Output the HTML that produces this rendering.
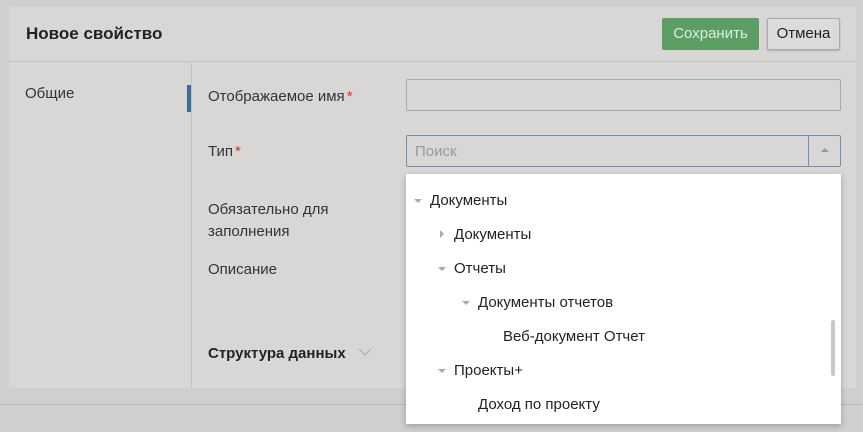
<!DOCTYPE html>
<html><head><meta charset="utf-8"><style>
*{box-sizing:border-box;margin:0;padding:0}
body{width:863px;height:432px;overflow:hidden;background:#cfcfce;font-family:"Liberation Sans","Noto Sans CJK SC",sans-serif;position:relative;color:#333}
.dlg{position:absolute;left:9px;top:7px;width:847px;height:381px;background:#d8d7d6}
.hdr{position:absolute;left:0;top:0;width:847px;height:55px;border-bottom:1px solid #c4c3c2}
.title{position:absolute;left:17px;top:17px;font-size:17px;font-weight:bold;color:#222}
.save{position:absolute;left:653px;top:11px;width:97px;height:32px;background:#5c9e64;color:#dfeee0;font-size:15px;line-height:32px;text-align:center;border-radius:2px}
.cancel{position:absolute;left:758px;top:11px;width:73px;height:32px;border:1px solid #aaa;background:#dcdbda;color:#222;font-size:15px;line-height:30px;text-align:center;border-radius:2px;box-shadow:0 1px 2px rgba(0,0,0,.2)}
.nav{position:absolute;left:0;top:56px;width:183px;height:325px;border-right:1px solid #c4c3c2}
.nav span{position:absolute;left:16px;top:22px;font-size:15px}
.bar{position:absolute;left:178px;top:22px;width:4px;height:27px;background:#3b6b9a}
.lbl{position:absolute;font-size:15px;color:#333}
.req{color:#d03030;margin-left:2px}
.inp{position:absolute;left:406px;width:435px;height:32px;border:1px solid #aaa;border-radius:2px}
.dd{position:absolute;left:406px;top:174px;width:435px;height:250px;background:#fff;box-shadow:0 2px 6px rgba(0,0,0,.25)}
.it{position:absolute;font-size:15px;color:#222}
.tri{position:absolute;width:0;height:0}
.down{border-left:4px solid transparent;border-right:4px solid transparent;border-top:4px solid #aaa}
.right{border-top:4px solid transparent;border-bottom:4px solid transparent;border-left:4px solid #aaa}
</style></head><body>
<div style="position:absolute;left:0;top:404px;width:863px;height:1px;background:#b8b8b8"></div>
<div class="dlg">
 <div class="hdr"><div class="title">Новое свойство</div><div class="save">Сохранить</div><div class="cancel">Отмена</div></div>
 <div class="nav"><span>Общие</span><div class="bar"></div></div>
</div>
<div class="lbl" style="left:208px;top:88px">Отображаемое имя<span class="req">*</span></div>
<div class="lbl" style="left:208px;top:143px">Тип<span class="req">*</span></div>
<div class="lbl" style="left:208px;top:199px;line-height:22px">Обязательно для<br>заполнения</div>
<div class="lbl" style="left:208px;top:261px">Описание</div>
<div class="lbl" style="left:208px;top:345px;font-weight:bold;color:#222">Структура данных</div>
<svg style="position:absolute;left:358px;top:348px" width="14" height="9"><path d="M1 1 L7 7 L13 1" fill="none" stroke="#aaa" stroke-width="1"/></svg>
<div class="inp" style="top:79px"></div>
<div class="inp" style="top:135px;border-color:#6d8fb3"><span style="position:absolute;left:8px;top:7px;font-size:15px;color:#999">Поиск</span><div style="position:absolute;left:401px;top:0;width:1px;height:30px;background:#6d8fb3"></div><div class="tri" style="left:414px;top:12px;border-left:4px solid transparent;border-right:4px solid transparent;border-bottom:4px solid #999"></div></div>
<div class="dd">
 <div class="tri down" style="left:8px;top:25px"></div><div class="it" style="left:24px;top:18px">Документы</div>
 <div class="tri right" style="left:34px;top:56px"></div><div class="it" style="left:48px;top:52px">Документы</div>
 <div class="tri down" style="left:32px;top:93px"></div><div class="it" style="left:48px;top:86px">Отчеты</div>
 <div class="tri down" style="left:56px;top:127px"></div><div class="it" style="left:72px;top:120px">Документы отчетов</div>
 <div class="it" style="left:97px;top:154px">Веб-документ Отчет</div>
 <div class="tri down" style="left:32px;top:195px"></div><div class="it" style="left:48px;top:188px">Проекты+</div>
 <div class="it" style="left:72px;top:222px">Доход по проекту</div>
 <div style="position:absolute;left:425px;top:146px;width:4px;height:56px;background:#c8c8c8;border-radius:2px"></div>
</div>
</body></html>
